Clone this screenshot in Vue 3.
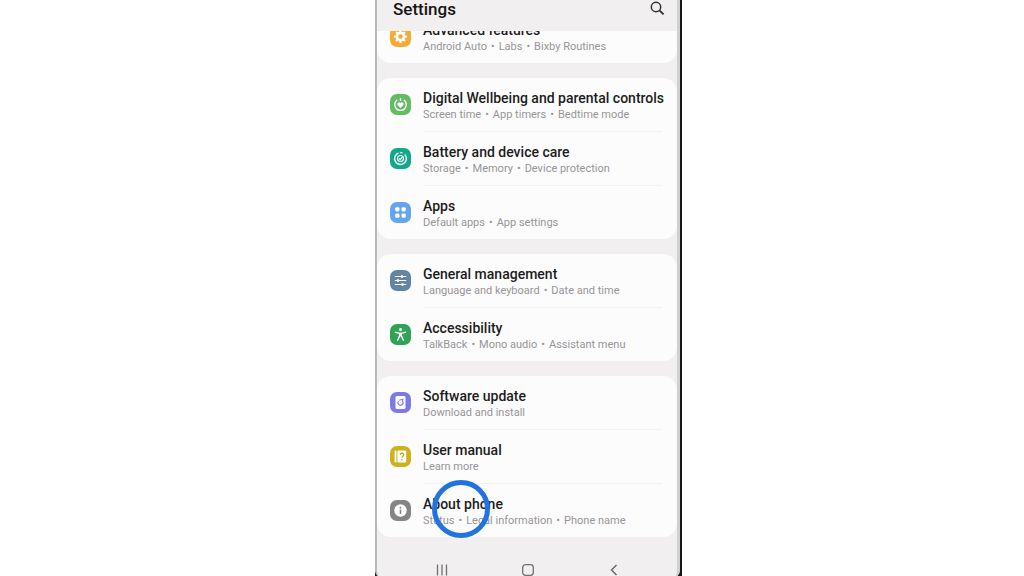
<script setup>
const groups = [
  [{ id: 'advanced', title: 'Advanced features', sub: ['Android Auto', 'Labs', 'Bixby Routines'] }],
  [
    { id: 'wellbeing', title: 'Digital Wellbeing and parental controls', sub: ['Screen time', 'App timers', 'Bedtime mode'] },
    { id: 'battery', title: 'Battery and device care', sub: ['Storage', 'Memory', 'Device protection'] },
    { id: 'apps', title: 'Apps', sub: ['Default apps', 'App settings'] },
  ],
  [
    { id: 'general', title: 'General management', sub: ['Language and keyboard', 'Date and time'] },
    { id: 'accessibility', title: 'Accessibility', sub: ['TalkBack', 'Mono audio', 'Assistant menu'] },
  ],
  [
    { id: 'update', title: 'Software update', sub: ['Download and install'] },
    { id: 'manual', title: 'User manual', sub: ['Learn more'] },
    { id: 'about', title: 'About phone', sub: ['Status', 'Legal information', 'Phone name'], tapped: true },
  ],
]
</script>

<template>
  <main class="page">
    <div class="phone">
      <div class="screen">
        <header class="bar">
          <h1>Settings</h1>
          <button class="search" aria-label="Search">
            <svg viewBox="0 0 16 16" width="16" height="16" fill="none" stroke="#303030">
              <circle cx="7" cy="6" r="4.7" stroke-width="1.5" />
              <path d="M10.4 9.4L14.6 13.4" stroke-width="1.9" />
            </svg>
          </button>
        </header>

        <div class="list">
          <nav v-for="(group, g) in groups" :key="g" class="card">
            <a v-for="item in group" :key="item.id" href="#" class="row">
              <svg class="icon" :class="item.id" viewBox="0 0 21 21" width="21" height="21" fill="none" stroke="#fff">
                <rect width="21" height="21" rx="7" fill="currentColor" stroke="none" />
                <g v-if="item.id === 'advanced'">
                  <circle cx="10.5" cy="10.5" r="3.6" stroke-width="2.6" />
                  <path d="M10.5 4v2M10.5 15v2M4 10.5h2M15 10.5h2M6 6l1.4 1.4M13.6 13.6L15 15M15 6l-1.4 1.4M7.4 13.6L6 15" stroke-width="2" />
                </g>
                <g v-else-if="item.id === 'wellbeing'">
                  <path d="M7.2 5.8a5.8 5.8 0 1 0 6.6 0M10.5 4v3" stroke-width="1.4" />
                  <path d="M10.5 14L7.6 11.1A1.7 1.7 0 0 1 10.5 9.2A1.7 1.7 0 0 1 13.4 11.1Z" fill="#fff" stroke="none" />
                </g>
                <g v-else-if="item.id === 'battery'">
                  <path d="M8.5 5a5.9 5.9 0 1 0 6.2 1.4M10.4 4.5a5.8 5.8 0 0 1 2 .4" stroke-width="1.4" />
                  <circle cx="10.5" cy="10.5" r="3" stroke-width="1.1" />
                  <path d="M9 10.4l1.2 1.3 2.5-3" stroke-width="1.2" />
                </g>
                <g v-else-if="item.id === 'apps'" fill="#fff" stroke="none">
                  <rect x="5.2" y="5.2" width="4.3" height="4.3" rx="1.4" />
                  <rect x="11.5" y="5.2" width="4.3" height="4.3" rx="1.4" />
                  <rect x="5.2" y="11.5" width="4.3" height="4.3" rx="1.4" />
                  <rect x="11.5" y="11.5" width="4.3" height="4.3" rx="1.4" />
                </g>
                <g v-else-if="item.id === 'general'">
                  <path d="M4.8 6.5h11.4M4.8 10.5h11.4M4.8 14.5h11.4" stroke-width="1.1" />
                  <path d="M12 5.2v2.6M8 9.2v2.6M12.5 13.2v2.6" stroke-width="2" />
                </g>
                <g v-else-if="item.id === 'accessibility'">
                  <circle cx="10.5" cy="5.4" r="1.5" fill="#fff" stroke="none" />
                  <path d="M5.4 8.3l3.4.8h3.4l3.4-.8" stroke-width="1.4" stroke-linecap="round" />
                  <path d="M10.5 9v3.2" stroke-width="3" />
                  <path d="M9.6 12l-2 4.3M11.4 12l2 4.3" stroke-width="1.5" stroke-linecap="round" />
                </g>
                <g v-else-if="item.id === 'update'">
                  <rect x="5.5" y="4" width="10" height="13" rx="1.5" fill="#fff" stroke="none" />
                  <path d="M12.9 9.6a2.6 2.6 0 1 1-4.4-.6M9.2 8.2l3.6-.9-.3 2.9" stroke="#7d7ae6" stroke-width="1.1" />
                </g>
                <g v-else-if="item.id === 'manual'">
                  <path d="M5.5 4.6v11.8" stroke-width="1.8" />
                  <rect x="7.4" y="4.4" width="8.8" height="12.2" rx="1" fill="#fff" stroke="none" />
                  <path d="M10.2 8.9a1.7 1.7 0 1 1 2.6 1.4q-.9.6-.9 1.5M11.9 13v1.3" stroke="#c5a500" stroke-width="1.2" />
                </g>
                <g v-else>
                  <circle cx="10.5" cy="10.5" r="6.2" fill="#fff" stroke="none" />
                  <path d="M10.5 6.8v1.6M10.5 9.6v4.4" stroke="#858585" stroke-width="1.6" />
                </g>
              </svg>
              <span class="text">
                <span class="title">{{ item.title }}</span>
                <span class="sub">
                  <template v-for="(part, p) in item.sub" :key="part">
                    <span v-if="p">•</span>
                    <span>{{ part }}</span>
                  </template>
                </span>
              </span>
              <span v-if="item.tapped" class="ring"></span>
            </a>
          </nav>
        </div>

        <footer class="keys">
          <button aria-label="Recent apps">
            <svg viewBox="0 0 14 14" width="14" height="14" fill="none" stroke="#707070" stroke-width="1.3"><path d="M2.5 1.5v11M7 1.5v11M11.5 1.5v11" /></svg>
          </button>
          <button aria-label="Home">
            <svg viewBox="0 0 14 14" width="14" height="14" fill="none" stroke="#707070" stroke-width="1.3"><rect x="1.7" y="1.7" width="10.6" height="10.6" rx="2.8" /></svg>
          </button>
          <button aria-label="Back">
            <svg viewBox="0 0 14 14" width="14" height="14" fill="none" stroke="#606060" stroke-width="1.3"><path d="M9.5 2L4.5 7l5 5" /></svg>
          </button>
        </footer>
      </div>
    </div>
  </main>
</template>

<style>
body {
  background: #fff;
}
</style>

<style scoped>
.page {
  display: flex;
  justify-content: center;
  min-height: 100vh;
  padding-left: 33px;
  box-sizing: border-box;
  font-family: Roboto, "Liberation Sans", sans-serif;
}
.phone {
  display: flex;
  width: 30%;
  min-width: 307px;
  background: #161616;
  box-sizing: border-box;
  padding-right: 2px;
}
.screen {
  flex: 1;
  display: flex;
  flex-direction: column;
  background: #f2eff0;
  border-left: 2px solid #b9b9b9;
  border-right: 3px solid #cfd0d1;
  border-radius: 0 0 6px 6px;
}
.bar {
  display: flex;
  align-items: center;
  justify-content: space-between;
  height: 31px;
  padding: 0 12px 14px 16px;
  box-sizing: border-box;
}
h1 {
  margin: 0;
  font-size: 17px;
  line-height: 20px;
  font-weight: 500;
  color: #151515;
}
button {
  display: flex;
  padding: 0;
  border: 0;
  background: none;
}
.list {
  display: flex;
  flex-direction: column;
  gap: 15px;
  padding-bottom: 4px;
  overflow: hidden;
}
.card {
  background: #fdfcfd;
  border-radius: 14px;
}
.card:first-child {
  margin-top: -21px;
}
.row {
  position: relative;
  display: flex;
  align-items: center;
  gap: 12px;
  height: 53px;
  padding-left: 13px;
  color: inherit;
  text-decoration: none;
  white-space: nowrap;
}
.row + .row {
  margin-top: 1px;
}
.row + .row::before {
  content: "";
  position: absolute;
  top: -1px;
  left: 46px;
  right: 15px;
  height: 1px;
  background: #f2f1f4;
}
.icon {
  flex: none;
}
.text {
  display: flex;
  flex-direction: column;
  padding-top: 2px;
}
.title {
  font-size: 14px;
  line-height: 18px;
  font-weight: 500;
  color: #1c1c1c;
}
.sub {
  display: flex;
  gap: 4px;
  font-size: 11px;
  line-height: 16px;
  color: #979597;
}
.advanced { color: #f3ac35; }
.wellbeing { color: #62bd62; }
.battery { color: #12a98a; }
.apps { color: #63a5ee; }
.general { color: #6384a2; }
.accessibility { color: #2fa454; }
.update { color: #7d7ae6; }
.manual { color: #cfb11b; }
.about { color: #858585; }
.ring {
  position: absolute;
  top: -4px;
  left: 55px;
  width: 58px;
  height: 58px;
  box-sizing: border-box;
  border: 5px solid #2174df;
  border-radius: 50%;
}
.keys {
  display: flex;
  justify-content: center;
  gap: 72px;
  padding: 22px 0 0 2px;
}
</style>
